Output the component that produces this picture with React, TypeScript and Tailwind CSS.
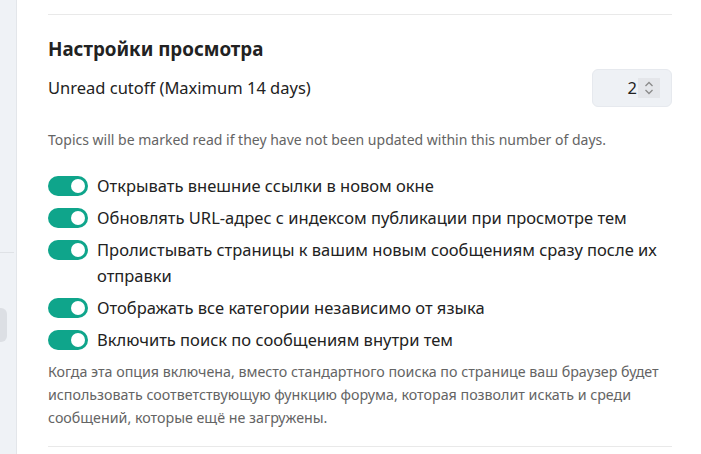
import React from 'react'

const toggles: string[] = [
  'Открывать внешние ссылки в новом окне',
  'Обновлять URL-адрес с индексом публикации при просмотре тем',
  'Пролистывать страницы к вашим новым сообщениям сразу после их отправки',
  'Отображать все категории независимо от языка',
  'Включить поиск по сообщениям внутри тем',
]

function Toggle() {
  return (
    <div className="mt-[3px] flex h-[20px] w-[40px] shrink-0 items-center justify-end rounded-full bg-[#0fa58b] pr-[3px]">
      <div className="h-[14px] w-[14px] rounded-full bg-white" />
    </div>
  )
}

export default function App() {
  return (
    <div className="flex h-[454px] w-[701px] overflow-hidden bg-white font-['Noto_Sans',sans-serif] text-[#222222]">
      {/* Sidebar edge */}
      <div className="flex w-[17px] shrink-0 flex-col border-r border-[#e3e6ea] bg-[#eff2f6]">
        <div className="mt-[252px] h-px w-[14px] bg-[#dfe2e6]" />
        <div className="mt-[55px] h-[34px] w-[7px] rounded-r-md bg-[#dcdfe4]" />
      </div>

      <div className="flex flex-1 flex-col pl-[31px] pr-[29px]">
        <div className="mt-[14px] h-px bg-[#e9e9e9]" />

        <h2 className="mt-[22px] text-[18.75px] font-bold leading-[24px] text-[#222222]">Настройки просмотра</h2>

        <div className="mt-[8px] flex items-center justify-between">
          <span className="text-[16.5px] leading-[24px]">Unread cutoff (Maximum 14 days)</span>
          <div className="flex h-[38px] w-[80px] items-center justify-end rounded-md border border-[#e6e9ee] bg-[#eef1f5] pr-[11px]">
            <span className="mr-[1px] text-[16.5px]">2</span>
            <div className="flex h-[20px] w-[22px] flex-col items-center justify-center bg-[#e4e6ea]">
              <svg width="10" height="6" viewBox="0 0 10 6" fill="none" stroke="#8a8a8a" strokeWidth="1.3">
                <path d="M1.5 5 L5 1.5 L8.5 5" />
              </svg>
              <svg width="10" height="6" viewBox="0 0 10 6" fill="none" stroke="#8a8a8a" strokeWidth="1.3" className="mt-[2px]">
                <path d="M1.5 1 L5 4.5 L8.5 1" />
              </svg>
            </div>
          </div>
        </div>

        <p className="mt-[23px] text-[14px] leading-[20px] text-[#646464]">
          Topics will be marked read if they have not been updated within this number of days.
        </p>

        <div className="mt-[23px] flex flex-col gap-[6px]">
          {toggles.map((label) => (
            <div key={label} className="flex items-start gap-[9px]">
              <Toggle />
              <span className="text-[16.5px] leading-[26px]">{label}</span>
            </div>
          ))}
        </div>

        <p className="mt-[7px] text-[14.25px] leading-[23px] text-[#646464]">
          Когда эта опция включена, вместо стандартного поиска по странице ваш браузер будет использовать
          соответствующую функцию форума, которая позволит искать и среди сообщений, которые ещё не загружены.
        </p>

        <div className="mt-[17px] h-px bg-[#e9e9e9]" />
      </div>
    </div>
  )
}
